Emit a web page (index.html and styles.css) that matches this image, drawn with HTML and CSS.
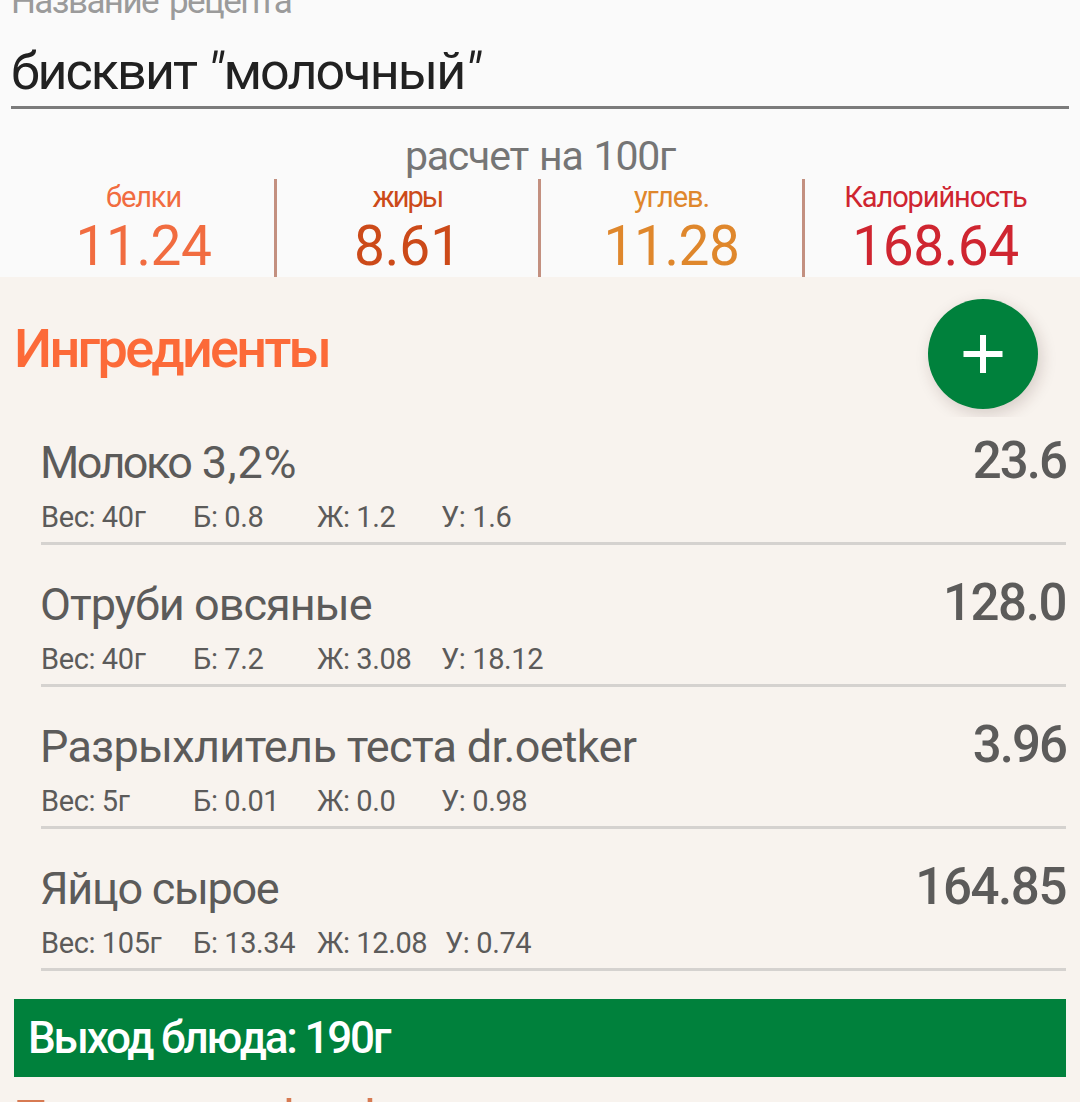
FILE: index.html
```html
<!DOCTYPE html>
<html lang="ru">
<head>
<meta charset="utf-8">
<title>Рецепт</title>
<link rel="stylesheet" href="styles.css">
</head>
<body>
<main class="screen">
  <header class="recipe">
    <div class="recipe-label">Название рецепта</div>
    <div class="recipe-name">бисквит <i>"</i>молочный<i>"</i></div>
  </header>
  <div class="per-portion">расчет на 100г</div>
  <section class="totals">
    <div class="total protein"><span class="total-label">белки</span><span class="total-value">11.24</span></div>
    <div class="total fat"><span class="total-label">жиры</span><span class="total-value">8.61</span></div>
    <div class="total carbs"><span class="total-label">углев.</span><span class="total-value">11.28</span></div>
    <div class="total calories"><span class="total-label">Калорийность</span><span class="total-value">168.64</span></div>
  </section>
  <section class="ingredients">
    <div class="ingredients-head">
      <h2 class="heading">Ингредиенты</h2>
      <button class="add" aria-label="Добавить">
        <svg width="40" height="40" viewBox="0 0 40 40"><path d="M20 1v38M.5 20h39" stroke="#fff" stroke-width="6" fill="none"/></svg>
      </button>
    </div>
    <ul class="list">
      <li class="item milk">
        <div class="item-main"><span class="item-name">Молоко <span class="fat-share">3,2%</span></span><span class="item-kcal">23.6</span></div>
        <div class="item-details"><span>Вес: 40г</span><span>Б: 0.8</span><span>Ж: 1.2</span><span>У: 1.6</span></div>
      </li>
      <li class="item bran">
        <div class="item-main"><span class="item-name">Отруби овсяные</span><span class="item-kcal">128.0</span></div>
        <div class="item-details"><span>Вес: 40г</span><span>Б: 7.2</span><span>Ж: 3.08</span><span>У: 18.12</span></div>
      </li>
      <li class="item powder">
        <div class="item-main"><span class="item-name">Разрыхлитель теста dr.oetker</span><span class="item-kcal">3.96</span></div>
        <div class="item-details"><span>Вес: 5г</span><span>Б: 0.01</span><span>Ж: 0.0</span><span>У: 0.98</span></div>
      </li>
      <li class="item egg">
        <div class="item-main"><span class="item-name">Яйцо сырое</span><span class="item-kcal">164.85</span></div>
        <div class="item-details"><span>Вес: 105г</span><span>Б: 13.34</span><span>Ж: 12.08</span><span>У: 0.74</span></div>
      </li>
    </ul>
    <div class="yield">Выход блюда: 190г</div>
    <div class="next-heading"><span>П</span><span>ф</span><span>ф</span></div>
  </section>
</main>
</body>
</html>
```

FILE: styles.css
```css
* { box-sizing: border-box; }

body {
  margin: 0;
  background: #fafafa;
  font-family: Roboto, "Noto Sans", sans-serif;
  overflow: hidden;
}

.screen {
  width: 1080px;
  height: 1102px;
  overflow: hidden;
  white-space: nowrap;
}

.recipe {
  margin: -18px 11px 0;
  border-bottom: 3px solid #7b7b7b;
}

.recipe-label {
  font-size: 35px;
  line-height: 40px;
  letter-spacing: -1.6px;
  word-spacing: 4px;
  color: #9b9b9b;
}

.recipe-name {
  padding-top: 16px;
  font-size: 52px;
  line-height: 68px;
  letter-spacing: -1.9px;
  color: #212121;
}

.recipe-name i { margin-right: 2px; }

.per-portion {
  padding-top: 24px;
  font-size: 41px;
  line-height: 46px;
  letter-spacing: -1.2px;
  word-spacing: 2px;
  text-align: center;
  color: #757575;
}

.totals {
  display: grid;
  grid-template-columns: repeat(4, 264px);
  padding-left: 13px;
}

.total {
  display: flex;
  flex-direction: column;
  align-items: center;
  height: 98px;
  border-right: 3px solid #c39080;
}

.total:last-child { border-color: transparent; }

.total-label {
  font-size: 29px;
  line-height: 36px;
  letter-spacing: -1.1px;
}

.total-value {
  font-size: 55px;
  line-height: 62px;
  letter-spacing: -0.4px;
}

.protein { color: #f16c40; }
.fat { color: #cc4a19; }
.fat .total-label { letter-spacing: -2px; }
.fat .total-value { letter-spacing: 0; }
.carbs { color: #df872c; }
.calories { color: #cf2530; }

.ingredients { background: #f8f3ee; }

.ingredients-head {
  display: flex;
  justify-content: space-between;
  align-items: flex-start;
  height: 140px;
  padding: 22px 42px 0 14px;
  overflow: hidden;
}

.heading {
  margin: 18px 0 0;
  font-size: 54px;
  font-weight: 500;
  line-height: 64px;
  letter-spacing: -2.7px;
  color: #fc6a38;
}

.add {
  display: grid;
  place-items: center;
  width: 110px;
  height: 110px;
  padding: 0;
  border: 0;
  border-radius: 50%;
  background: #00813c;
  box-shadow: 3px 5px 16px rgba(60, 30, 20, 0.18);
}

.list {
  display: grid;
  gap: 14px;
  margin: 0;
  padding: 0 14px 0 41px;
  list-style: none;
  color: #5c5b5a;
}

.item {
  height: 128px;
  padding-top: 16px;
  border-bottom: 3px solid #d5d2cf;
}

.item-main {
  display: flex;
  justify-content: space-between;
  align-items: baseline;
  height: 58px;
  margin-left: -1px;
}

.item-name {
  font-size: 45px;
  line-height: 56px;
}

.item-kcal {
  font-size: 51px;
  font-weight: 500;
  line-height: 56px;
  letter-spacing: -1.4px;
}

.milk .item-name { letter-spacing: -2.6px; }
.milk .fat-share { margin-left: 3px; letter-spacing: 0.8px; }
.milk .item-kcal { letter-spacing: -2px; }
.bran .item-name { letter-spacing: -0.95px; }
.powder .item-name { letter-spacing: -0.67px; }
.powder .item-kcal { letter-spacing: -2px; }
.egg .item-name { letter-spacing: -1.3px; }

.item-details {
  display: grid;
  grid-template-columns: 152px 124px 124px auto;
  justify-content: start;
  margin-top: 9px;
  font-size: 29px;
  line-height: 34px;
  letter-spacing: -0.4px;
}

.egg .item-details { grid-template-columns: 152px 124px 128px auto; }

.yield {
  margin: 28px 14px 0;
  padding-left: 14px;
  background: #00813c;
  color: #fff;
  font-size: 44px;
  font-weight: 500;
  line-height: 78px;
  letter-spacing: -2.2px;
}

.next-heading {
  display: grid;
  grid-template-columns: 258px 81px auto;
  justify-content: start;
  padding: 10px 0 0 13px;
  font-size: 50px;
  line-height: 64px;
  color: #d77a52;
}
```
